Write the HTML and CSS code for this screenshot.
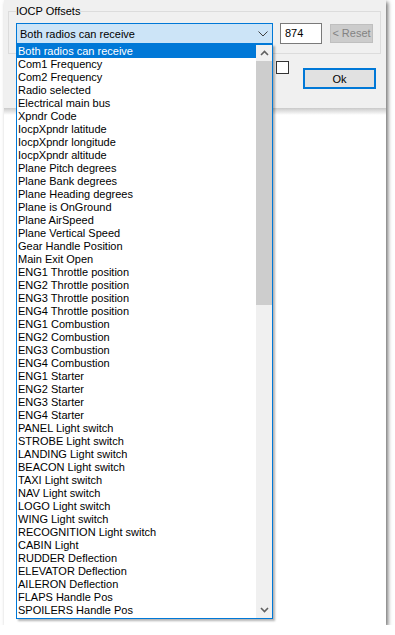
FILE: index.html
```html
<!DOCTYPE html>
<html>
<head>
    <title>IOCP Offsets</title>
    <link rel="stylesheet" href="styles.css">
</head>
<body>
    <div class="window">
        <div class="dialog">
            <fieldset class="group">
                <legend>IOCP Offsets</legend>
                <div class="group-row">
                    <div class="combo">
                        <span class="combo-text">Both radios can receive</span>
                        <svg class="combo-arrow" width="10" height="6" viewBox="0 0 10 6"><path d="M0.5 0.5 L5 5 L9.5 0.5" fill="none" stroke="#404040" stroke-width="1"/></svg>
                    </div>
                    <div class="textbox">874</div>
                    <div class="btn-reset">&lt; Reset</div>
                </div>
            </fieldset>
            <div class="bottom-row">
                <div class="checkbox"></div>
                <div class="btn-ok">Ok</div>
            </div>
        </div>
        <div class="dialog-edge"></div>

        <!-- dropdown opened over the dialog -->
        <div class="dropdown">
            <div class="list" id="list"></div>
            <div class="scrollbar">
                <div class="sb-arrow">
                    <svg width="9" height="6" viewBox="0 0 9 6"><path d="M1 5 L4.5 1.5 L8 5" fill="none" stroke="#606060" stroke-width="1.6"/></svg>
                </div>
                <div class="sb-thumb"></div>
                <div class="sb-track"></div>
                <div class="sb-arrow">
                    <svg width="9" height="6" viewBox="0 0 9 6"><path d="M1 1 L4.5 4.5 L8 1" fill="none" stroke="#606060" stroke-width="1.6"/></svg>
                </div>
            </div>
        </div>
    </div>
    <script>
        var items = [
            'Both radios can receive', 'Com1 Frequency', 'Com2 Frequency', 'Radio selected',
            'Electrical main bus', 'Xpndr Code', 'IocpXpndr latitude', 'IocpXpndr longitude',
            'IocpXpndr altitude', 'Plane Pitch degrees', 'Plane Bank degrees', 'Plane Heading degrees',
            'Plane is OnGround', 'Plane AirSpeed', 'Plane Vertical Speed', 'Gear Handle Position',
            'Main Exit Open', 'ENG1 Throttle position', 'ENG2 Throttle position', 'ENG3 Throttle position',
            'ENG4 Throttle position', 'ENG1 Combustion', 'ENG2 Combustion', 'ENG3 Combustion',
            'ENG4 Combustion', 'ENG1 Starter', 'ENG2 Starter', 'ENG3 Starter', 'ENG4 Starter',
            'PANEL Light switch', 'STROBE Light switch', 'LANDING Light switch', 'BEACON Light switch',
            'TAXI Light switch', 'NAV Light switch', 'LOGO Light switch', 'WING Light switch',
            'RECOGNITION Light switch', 'CABIN Light', 'RUDDER Deflection', 'ELEVATOR Deflection',
            'AILERON Deflection', 'FLAPS Handle Pos', 'SPOILERS Handle Pos'
        ];
        var list = document.getElementById('list');
        items.forEach(function (text, i) {
            var div = document.createElement('div');
            div.className = i === 0 ? 'item selected' : 'item';
            div.textContent = text;
            list.appendChild(div);
        });
    </script>
</body>
</html>
```

FILE: styles.css
```css
body {
    margin: 0;
    padding: 0;
    background-color: #fff;
    font-family: "Liberation Sans", Arial, sans-serif;
    font-size: 11px;
    color: #000;
}

.window {
    position: relative;
    width: 382px;
    height: 625px;
    margin-left: 4px;
    background-color: #fff;
    box-shadow: 2px 2px 4px rgba(0, 0, 0, 0.55);
}

.dialog {
    height: 104px;
    padding-top: 4px;
    background-color: #f0f0f0;
}

.dialog-edge {
    height: 7px;
    background: linear-gradient(#c9c9c9, #fff);
}

.group {
    margin: 0 5px 0 4px;
    padding: 5px 0 9px 7px;
    border: 1px solid #dcdcdc;
}

.group legend {
    padding: 0;
    line-height: 14px;
    color: #000;
}

.group-row {
    display: flex;
    align-items: center;
}

.combo {
    display: flex;
    align-items: center;
    justify-content: space-between;
    box-sizing: border-box;
    width: 257px;
    height: 21px;
    padding: 0 4px 0 3px;
    background-color: #cce4f7;
    border: 1px solid #0078d7;
}

.combo-arrow {
    margin-top: 1px;
}

.textbox {
    box-sizing: border-box;
    width: 42px;
    height: 21px;
    margin-left: 7px;
    padding: 3px 0 0 4px;
    background-color: #fff;
    border: 1px solid #7a7a7a;
}

.btn-reset {
    box-sizing: border-box;
    width: 43px;
    height: 19px;
    margin-left: 8px;
    padding-top: 2px;
    text-align: center;
    color: #838383;
    background-color: #cccccc;
    border: 1px solid #bfbfbf;
}

.bottom-row {
    display: flex;
    justify-content: flex-end;
    padding-right: 10px;
}

.checkbox {
    box-sizing: border-box;
    width: 13px;
    height: 13px;
    margin-top: 7px;
    background-color: #fff;
    border: 1px solid #333;
}

.btn-ok {
    box-sizing: border-box;
    width: 73px;
    height: 21px;
    margin: 14px 0 0 14px;
    padding-top: 3px;
    text-align: center;
    background-color: #e1e1e1;
    border: 2px solid #0078d7;
}

.dropdown {
    position: absolute;
    left: 12px;
    top: 44px;
    z-index: 10;
    display: flex;
    box-sizing: border-box;
    width: 257px;
    height: 575px;
    background-color: #fff;
    border: 1px solid #0078d7;
    box-shadow: 2px 2px 2px rgba(0, 0, 0, 0.3);
}

.list {
    flex: 1;
}

.item {
    height: 13px;
    line-height: 13px;
    padding-left: 1px;
    white-space: nowrap;
}

.item.selected {
    background-color: #0078d7;
    color: #fff;
}

.scrollbar {
    display: flex;
    flex-direction: column;
    width: 16px;
    background-color: #f0f0f0;
}

.sb-arrow {
    display: flex;
    align-items: center;
    justify-content: center;
    height: 16px;
}

.sb-thumb {
    height: 244px;
    background-color: #cdcdcd;
}

.sb-track {
    flex: 1;
}
```
